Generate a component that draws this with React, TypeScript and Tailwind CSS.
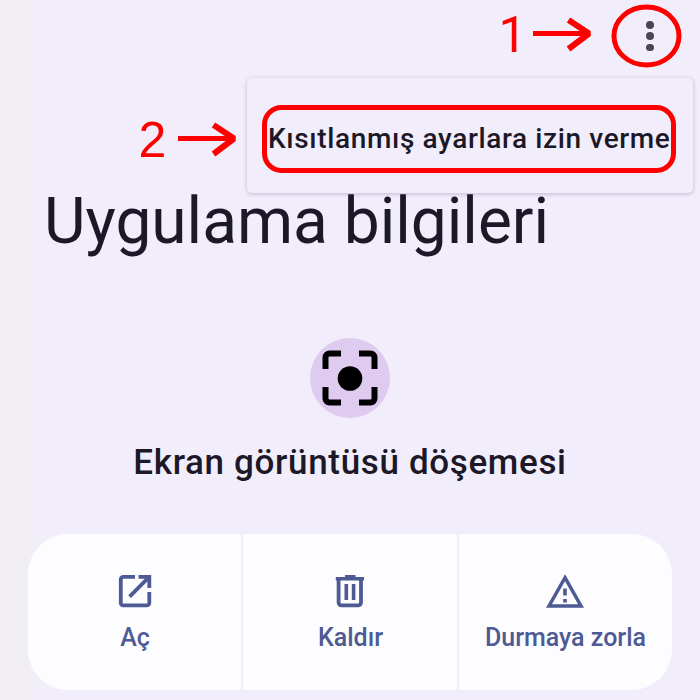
import type { ReactNode } from "react";

function OpenIcon() {
  return (
    <svg width="34" height="34" viewBox="0 0 34 34" fill="none" stroke="#4e5a94" strokeWidth="3.8">
      <path d="M17 2.900H5.300a2.500 2.500 0 0 0-2.500 2.500v23.500a2.500 2.500 0 0 0 2.500 2.500h23.500a2.500 2.500 0 0 0 2.500-2.500V18" />
      <path d="M20.500 2.900h10.800v11M31 3.200L11.600 22.600" />
    </svg>
  );
}

function TrashIcon() {
  return (
    <svg width="34" height="34" viewBox="0 0 34 34" fill="none" stroke="#4e5a94">
      <path d="M5.600 5V28.600a2.800 2.800 0 0 0 2.800 2.800H25.200a2.800 2.800 0 0 0 2.800-2.800V5" strokeWidth="3.8" />
      <path d="M2.800 4.800H31M12 2.800h10.500" strokeWidth="3.6" />
      <path d="M13.300 10V26M20.600 10V26" strokeWidth="3.6" />
    </svg>
  );
}

function WarningIcon() {
  return (
    <svg width="40" height="36" viewBox="0 0 40 36" fill="none" stroke="#4e5a94" strokeWidth="3.5">
      <path d="M20 4.700L36 33H4z" />
      <path d="M20 15.500v7M20 26v3.400" strokeWidth="3.6" />
    </svg>
  );
}

function Action({ icon, label, className }: { icon: ReactNode; label: string; className: string }) {
  return (
    <button className={`flex h-[156px] flex-col items-center bg-[#fdfcff] pt-10 text-[#4e5a94] ${className}`}>
      <span className="flex h-[34px] items-center justify-center">{icon}</span>
      <span className="mt-[15px] pl-px text-[25px] leading-[30px] font-medium whitespace-nowrap">{label}</span>
    </button>
  );
}

function Annotations() {
  return (
    <svg className="absolute inset-0" width="700" height="700" viewBox="0 0 700 700" fill="none" stroke="#ff0000">
      <ellipse cx="646.5" cy="36" rx="32.5" ry="29" strokeWidth="5" />
      <path d="M533 33.5H589" strokeWidth="4.8" />
      <path d="M568.5 20L589 33.5L568.5 49" strokeWidth="6" strokeLinejoin="bevel" />
      <path d="M178 138.5H235" strokeWidth="4.8" />
      <path d="M213.500 125L234 138.500L213.500 154" strokeWidth="6" strokeLinejoin="bevel" />
      <rect x="264.500" y="107.500" width="409" height="63" rx="17" strokeWidth="5" />
      <g fill="#ff0000" stroke="none" fontSize="50">
        <text x="498.500" y="52" fontFamily="Roboto, sans-serif">1</text>
        <text x="138.500" y="157" fontFamily="Liberation Sans, Arial, sans-serif">2</text>
      </g>
    </svg>
  );
}

export default function App() {
  return (
    <div className="relative h-[700px] w-[700px] overflow-hidden bg-[#f1edfb] bg-linear-to-r from-[#f1eff2] from-[14px] to-[#f1edfb] to-[48px] font-['Roboto',sans-serif] text-[#1d1827]">
      <header className="flex h-[78px] justify-end pt-[21px] pr-[44px]">
        <button className="flex h-[30px] w-3 flex-col items-center justify-between">
          <span className="size-[7.5px] rounded-full bg-[#49464d]" />
          <span className="size-[7.5px] rounded-full bg-[#49464d]" />
          <span className="size-[7.5px] rounded-full bg-[#49464d]" />
        </button>
      </header>

      <h1 className="mt-[104px] pl-[44px] text-[64px] leading-[80px] font-normal whitespace-nowrap">Uygulama bilgileri</h1>

      <section className="mt-[76px] flex flex-col items-center">
        <div className="flex size-20 items-center justify-center rounded-full bg-[#dfcaf0]">
          <svg width="56" height="56" viewBox="0 0 56 56" fill="none" stroke="#000" strokeWidth="6">
            <path d="M3.500 19V7.500a4 4 0 0 1 4-4H19M37 3.500h11.500a4 4 0 0 1 4 4V19M52.500 37v11.500a4 4 0 0 1-4 4H37M19 52.500H7.500a4 4 0 0 1-4-4V37" />
            <circle cx="28" cy="28.500" r="12.300" fill="#000" stroke="none" />
          </svg>
        </div>
        <h2 className="mt-[25px] text-[35px] leading-[40px] font-medium tracking-[0.65px] whitespace-nowrap">Ekran görüntüsü döşemesi</h2>
      </section>

      <section className="mx-[28px] mt-[51px] grid grid-cols-[213px_214px_213px] gap-[2px]">
        <Action icon={<OpenIcon />} label="Aç" className="rounded-l-[40px]" />
        <Action icon={<TrashIcon />} label="Kaldır" className="" />
        <Action icon={<WarningIcon />} label="Durmaya zorla" className="rounded-r-[40px] pr-px" />
      </section>

      <div className="absolute top-[78px] left-[247px] h-[115px] w-[446px] rounded-[5px] bg-[#f1edfa] pt-[45px] pl-[21px] shadow-[0_1px_4px_rgba(60,50,90,0.28)]">
        <p className="text-[28px] leading-[32px] font-medium tracking-[0.63px] whitespace-nowrap">Kısıtlanmış ayarlara izin verme</p>
      </div>

      <Annotations />
    </div>
  );
}
